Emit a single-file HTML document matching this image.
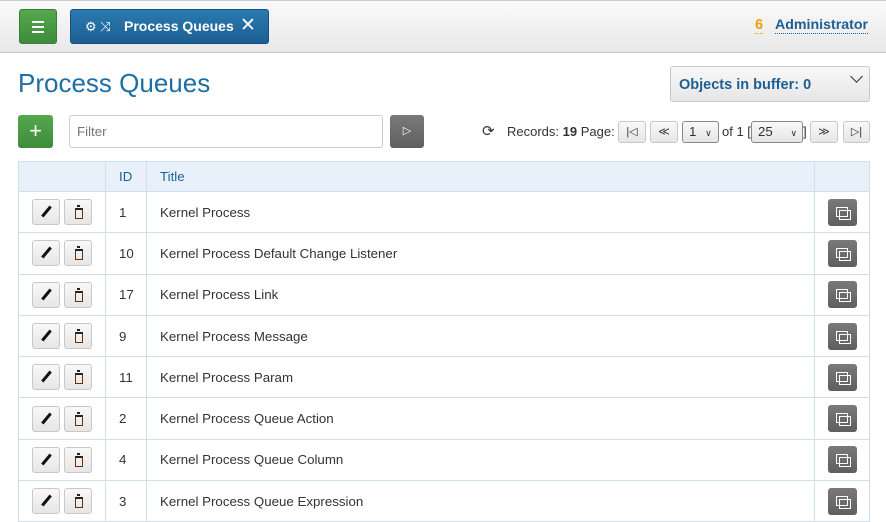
<!DOCTYPE html><html><head><style>
*{box-sizing:border-box}body{margin:0;width:886px;height:505px;overflow:hidden;background:#fff;font-family:"Liberation Sans",sans-serif;font-size:13.3px;color:#333;position:relative}
.top{position:absolute;left:0;top:0;width:886px;height:53px;background:linear-gradient(#fafafa,#e8e8e8);border-top:1px solid #ccc;border-bottom:1px solid #c8c8c8}
.abs{position:absolute}
.menu{left:19px;top:9px;width:38px;height:35px;background:linear-gradient(#55a84e,#3f8b3a);border-radius:3px;border:1px solid #3a7e35}
.tab{left:70px;top:9px;width:199px;height:35px;background:linear-gradient(#2a7ab1,#1d5f92);border-radius:3px;border:1px solid #18507c;color:#fff;font-weight:bold;font-size:14px;line-height:33px}
.btn{background:linear-gradient(#f8f8f8,#e6e6e6);border:1px solid #c8c8c8;border-radius:3px}
table{position:absolute;left:18px;top:161px;border-collapse:collapse;width:852px}
td,th{border:1px solid #cfe0ec;height:41.3px;padding:0 0 0 13px;text-align:left;font-weight:normal}
th{background:#e8f1f9;height:30px;color:#1d5f92}
.ic{display:inline-block;width:28px;height:26px;vertical-align:middle;margin-right:4px;position:relative}
.grey{display:inline-block;width:29px;height:27px;background:linear-gradient(#7a7a7a,#5f5f5f);border-radius:3px;vertical-align:middle;position:relative}
</style></head><body>
<div class="top"></div>
<div class="abs menu"><div class="abs" style="left:12px;top:11px;width:12px;height:2px;background:#fff;box-shadow:0 5px #fff,0 10px #fff"></div></div>
<div class="abs tab"><span style="position:absolute;left:14px;font-size:13px;font-weight:normal">⚙ ⤨</span><span style="position:absolute;left:53px">Process Queues</span><span style="position:absolute;left:169px;top:-1px;font-weight:normal;font-size:19px">✕</span></div>
<div class="abs" style="left:755px;top:17px;font-weight:bold;font-size:14.5px;color:#f0a000;border-bottom:1px dotted #f0a000">6</div>
<div class="abs" style="left:775px;top:17px;font-weight:bold;font-size:14.2px;color:#1d5f92;border-bottom:1px dotted #1d5f92">Administrator</div>
<div class="abs" style="left:18px;top:68px;font-size:26px;color:#1d6fa5">Process Queues</div>
<div class="abs btn" style="left:670px;top:66px;width:200px;height:36px;font-weight:bold;color:#1d5f92;font-size:14.5px;padding:10px 0 0 8px">Objects in buffer: 0<span style="position:absolute;right:8px;top:5px;width:9px;height:9px;border-right:1.5px solid #333;border-bottom:1.5px solid #333;transform:rotate(45deg)"></span></div>
<div class="abs" style="left:18px;top:115px;width:35px;height:33px;background:linear-gradient(#55a84e,#3f8b3a);border-radius:3px;color:#fff;font-size:22px;text-align:center;line-height:31px">+</div>
<div class="abs" style="left:69px;top:115px;width:314px;height:33px;border:1px solid #ccc;border-radius:3px;color:#777;padding:8px 0 0 7px">Filter</div>
<div class="abs" style="left:390px;top:115px;width:34px;height:33px;background:linear-gradient(#7a7a7a,#5f5f5f);border-radius:3px;color:#fff;text-align:center;line-height:32px;font-size:11px">▷</div>
<div class="abs" style="left:482px;top:122px;font-size:15px">⟳</div>
<div class="abs" style="left:507px;top:124px;font-size:13px">Records: <b>19</b> Page:</div>
<div class="abs btn" style="left:618px;top:121px;width:28px;height:22px;text-align:center;font-size:11px;line-height:20px">|◁</div>
<div class="abs btn" style="left:650px;top:121px;width:28px;height:22px;text-align:center;font-size:11px;line-height:20px">≪</div>
<div class="abs btn" style="left:682px;top:121px;width:37px;height:22px;border-color:#888;padding:2px 0 0 6px">1 <span style="font-size:9px;margin-left:5px">∨</span></div>
<div class="abs" style="left:722px;top:124px;font-size:13px">of 1 [</div>
<div class="abs btn" style="left:751px;top:121px;width:52px;height:22px;border-color:#888;padding:2px 0 0 6px">25 <span style="font-size:9px;margin-left:14px">∨</span></div>
<div class="abs" style="left:803px;top:124px">]</div>
<div class="abs btn" style="left:810px;top:121px;width:28px;height:22px;text-align:center;font-size:11px;line-height:20px">≫</div>
<div class="abs btn" style="left:843px;top:121px;width:27px;height:22px;text-align:center;font-size:11px;line-height:20px">▷|</div>
<table>
<tr><th style="width:87px"></th><th style="width:41px">ID</th><th>Title</th><th style="width:55px"></th></tr>
<tr><td><span class="ic btn"></span><span class="ic btn"></span></td><td>1</td><td>Kernel Process</td><td><span class="grey"></span></td></tr>
<tr><td><span class="ic btn"></span><span class="ic btn"></span></td><td>10</td><td>Kernel Process Default Change Listener</td><td><span class="grey"></span></td></tr>
<tr><td><span class="ic btn"></span><span class="ic btn"></span></td><td>17</td><td>Kernel Process Link</td><td><span class="grey"></span></td></tr>
<tr><td><span class="ic btn"></span><span class="ic btn"></span></td><td>9</td><td>Kernel Process Message</td><td><span class="grey"></span></td></tr>
<tr><td><span class="ic btn"></span><span class="ic btn"></span></td><td>11</td><td>Kernel Process Param</td><td><span class="grey"></span></td></tr>
<tr><td><span class="ic btn"></span><span class="ic btn"></span></td><td>2</td><td>Kernel Process Queue Action</td><td><span class="grey"></span></td></tr>
<tr><td><span class="ic btn"></span><span class="ic btn"></span></td><td>4</td><td>Kernel Process Queue Column</td><td><span class="grey"></span></td></tr>
<tr><td><span class="ic btn"></span><span class="ic btn"></span></td><td>3</td><td>Kernel Process Queue Expression</td><td><span class="grey"></span></td></tr>
</table>
<style>
.ic.btn:nth-child(1)::after{content:"";position:absolute;left:12px;top:5px;width:3px;height:13px;background:#111;transform:rotate(40deg)}
.ic.btn:nth-child(2)::after{content:"";position:absolute;left:10px;top:8px;width:6px;height:8px;border:1.5px solid #6a3000;border-top:2px solid #222}
.ic.btn:nth-child(2)::before{content:"";position:absolute;left:12px;top:5px;width:3px;height:2px;background:#222}
.grey::before{content:"";position:absolute;left:8px;top:8px;width:10px;height:8px;border:1.5px solid #fff}
.grey::after{content:"";position:absolute;left:11px;top:11px;width:10px;height:8px;border:1.5px solid #fff}
</style>
</body></html>
